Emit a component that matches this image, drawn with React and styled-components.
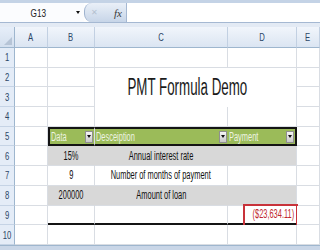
import React from "react";
import styled, { createGlobalStyle } from "styled-components";

const Global = createGlobalStyle`
  html, body {
    margin: 0;
    padding: 0;
    background: #ffffff;
    overflow: hidden;
  }
  body {
    font-family: "Liberation Sans", Arial, sans-serif;
  }
`;

const Window = styled.div`
  width: 320px;
  height: 250px;
  display: flex;
  flex-direction: column;
  background: #dfe7f2;
  overflow: hidden;
`;

const TopStrip = styled.div`
  height: 3px;
  background: #c4d3e6;
`;

const FormulaBar = styled.div`
  display: flex;
  height: 19px;
  background: #ffffff;
  border-bottom: 1px solid #a5b8d2;
`;

const NameBox = styled.div`
  width: 84px;
  display: flex;
  align-items: center;
  justify-content: space-between;
  padding: 0 4px 0 28px;
  box-sizing: border-box;
  font-size: 11px;
  color: #222;
  background: #fbfcfe;
`;

const Caret = styled.span`
  width: 0;
  height: 0;
  border-left: 2.5px solid transparent;
  border-right: 2.5px solid transparent;
  border-top: 3px solid #111;
`;

const FxZone = styled.div`
  width: 42px;
  display: flex;
  align-items: center;
  justify-content: space-between;
  padding: 0 4px 0 6px;
  box-sizing: border-box;
  border-radius: 8px 0 0 8px;
  background: linear-gradient(#eaf0f8, #c7d5e8);
  border-left: 1px solid #9fb3cf;
  color: #b4c0cf;
  font-size: 8px;
`;

const Fx = styled.span`
  font-family: "Liberation Serif", serif;
  font-style: italic;
  font-size: 11px;
  color: #3a3a3a;
`;

const FormulaInput = styled.div`
  flex: 1;
  background: #ffffff;
  border-left: 1px solid #a5b8d2;
`;

const Gap = styled.div`
  height: 4px;
  background: #e3eaf4;
`;

const Sheet = styled.div`
  display: grid;
  grid-template-columns: 15px 33px 47px 133px 69px 1fr;
  grid-template-rows: 21px repeat(10, 19.7px);
  background: #ffffff;
`;

const Txt = styled.span`
  display: inline-block;
  white-space: nowrap;
  transform: scaleX(${(p) => p.$sx || 0.62});
  transform-origin: ${(p) => p.$o || "center"};
`;

const Corner = styled.div`
  position: relative;
  background: linear-gradient(#e6eef9, #d3dfee);
  border-right: 1px solid #9eb6ce;
  border-bottom: 1px solid #9eb6ce;
  &::after {
    content: "";
    position: absolute;
    right: 2px;
    bottom: 2px;
    border-left: 8px solid transparent;
    border-bottom: 8px solid #b6c4d6;
  }
`;

const ColHead = styled.div`
  display: flex;
  align-items: center;
  justify-content: center;
  font-size: 11px;
  color: #2b4566;
  background: linear-gradient(#f1f5fb, #dbe5f2);
  border-right: 1px solid #c2d0e2;
  border-bottom: 1px solid #9eb6ce;
`;

const RowHead = styled.div`
  display: flex;
  align-items: center;
  justify-content: center;
  font-size: 11px;
  color: #2b4566;
  background: #e4ecf7;
  border-right: 1px solid #9eb6ce;
  border-bottom: 1px solid #c5d3e5;
`;

const Cell = styled.div`
  position: relative;
  display: flex;
  align-items: center;
  justify-content: ${(p) => p.$justify || "center"};
  box-sizing: border-box;
  padding: 0 2px;
  font-size: 12px;
  color: ${(p) => p.$color || "#111"};
  background: ${(p) => p.$fill || "#ffffff"};
  border-right: ${(p) => p.$right || "1px solid #d9dde3"};
  border-bottom: ${(p) => p.$bottom || "1px solid #d9dde3"};
  border-top: ${(p) => p.$top || "none"};
  border-left: ${(p) => p.$left || "none"};
`;

const Title = styled(Cell)`
  grid-column: span 2;
  grid-row: span 2;
  padding-right: 18px;
  font-size: 23px;
  color: #1b1b1b;
`;

const HeadCell = styled(Cell)`
  justify-content: space-between;
  padding: 0 1px 0 1px;
  color: #eef4e2;
  background: #9bbb59;
  border-top: 2px solid #141414;
  border-bottom: 2px solid #141414;
  border-right: ${(p) => p.$right || "none"};
`;

const Drop = styled.span`
  width: 6px;
  height: 10px;
  display: flex;
  align-items: center;
  justify-content: center;
  background: linear-gradient(#f6f6f6, #c8c8c8);
  border: 1px solid #8f8f8f;
  &::after {
    content: "";
    border-left: 2px solid transparent;
    border-right: 2px solid transparent;
    border-top: 3px solid #111;
  }
`;

const ResultBox = styled.div`
  position: absolute;
  left: 15px;
  top: -2px;
  right: -2px;
  bottom: -7px;
  border: 2px solid #c8323a;
`;

const BottomEdge = styled.div`
  flex: 1;
  background: #c9d6e7;
  border-top: 1px solid #9eb6ce;
`;

const GRID = "1px solid #d9dde3";
const THICK = "2px solid #141414";
const SHADE = "#d8d8d8";

const rows = [
  { n: 1 },
  { n: 2, title: "PMT Formula Demo" },
  { n: 3, merged: true },
  { n: 4 },
  { n: 5, head: ["Data", "Desceiption", "Payment"] },
  { n: 6, b: "15%", c: "Annual interest rate", shade: true },
  { n: 7, b: "9", c: "Number of months of payment" },
  { n: 8, b: "200000", c: "Amount of loan", shade: true },
  { n: 9, result: "($23,634.11)" },
  { n: 10 },
];

const renderRow = (r) => {
  const out = [
    <RowHead key={`h${r.n}`}>
      <Txt $sx={0.7}>{r.n}</Txt>
    </RowHead>,
    <Cell key={`a${r.n}`} />,
  ];

  if (r.head) {
    out.push(
      <HeadCell key={`b${r.n}`} $left={THICK} $right={GRID}>
        <Txt $o="left">{r.head[0]}</Txt>
        <Drop />
      </HeadCell>,
      <HeadCell key={`c${r.n}`}>
        <Txt $o="left">{r.head[1]}</Txt>
        <Drop />
      </HeadCell>,
      <HeadCell key={`d${r.n}`} $right={THICK}>
        <Txt $o="left">{r.head[2]}</Txt>
        <Drop />
      </HeadCell>
    );
  } else if (r.title) {
    out.push(
      <Cell key={`b${r.n}`} />,
      <Title key={`t${r.n}`} $bottom="none">
        <Txt $sx={0.58}>{r.title}</Txt>
      </Title>
    );
  } else if (r.merged) {
    out.push(<Cell key={`b${r.n}`} />);
  } else if (r.result) {
    out.push(
      <Cell key={`b${r.n}`} $bottom={THICK} />,
      <Cell key={`c${r.n}`} $bottom={THICK} />,
      <Cell key={`d${r.n}`} $bottom={THICK} $justify="flex-end" $color="#c0282d">
        <Txt $o="right">{r.result}</Txt>
        <ResultBox />
      </Cell>
    );
  } else if (r.b) {
    const fill = r.shade ? SHADE : "#ffffff";
    const line = r.shade ? "1px solid #d8d8d8" : GRID;
    out.push(
      <Cell key={`b${r.n}`} $fill={fill} $right={line}>
        <Txt>{r.b}</Txt>
      </Cell>,
      <Cell key={`c${r.n}`} $fill={fill} $right={line}>
        <Txt>{r.c}</Txt>
      </Cell>,
      <Cell key={`d${r.n}`} $fill={fill} />
    );
  } else {
    out.push(<Cell key={`b${r.n}`} />, <Cell key={`c${r.n}`} />, <Cell key={`d${r.n}`} />);
  }

  out.push(<Cell key={`e${r.n}`} />);
  return out;
};

const App = () => {
  return (
    <>
      <Global />
      <Window>
        <TopStrip />
        <FormulaBar>
          <NameBox>
            <Txt $sx={0.75}>G13</Txt>
            <Caret />
          </NameBox>
          <FxZone>
            <span>✕</span>
            <Fx>fx</Fx>
          </FxZone>
          <FormulaInput />
        </FormulaBar>
        <Gap />
        <Sheet>
          <Corner />
          {["A", "B", "C", "D", "E"].map((c) => (
            <ColHead key={c}>
              <Txt $sx={0.7}>{c}</Txt>
            </ColHead>
          ))}
          {rows.map(renderRow)}
        </Sheet>
        <BottomEdge />
      </Window>
    </>
  );
};

export default App;
